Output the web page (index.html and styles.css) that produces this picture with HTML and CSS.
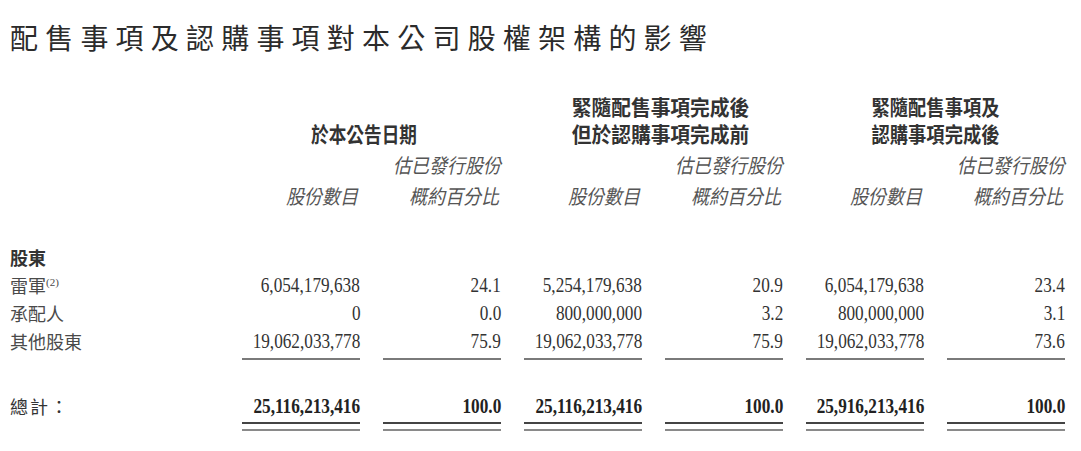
FILE: index.html
```html
<!DOCTYPE html>
<html lang="zh-Hant">
<head>
<meta charset="utf-8">
<title>配售事項及認購事項對本公司股權架構的影響</title>
<link rel="stylesheet" href="styles.css">
</head>
<body>
<h1 class="title">配售事項及認購事項對本公司股權架構的影響</h1>
<div class="sheet">
  <div class="blank"></div>
  <div class="group g1"><span class="hd">於本公告日期</span></div>
  <div class="group g2"><span class="hd">緊隨配售事項完成後<br>但於認購事項完成前</span></div>
  <div class="group g3"><span class="hd">緊隨配售事項及<br>認購事項完成後</span></div>

  <div class="blank"></div>
  <div class="sub"></div><div class="sub"><span>估已發行股份</span></div>
  <div class="sub"></div><div class="sub"><span>估已發行股份</span></div>
  <div class="sub"></div><div class="sub"><span>估已發行股份</span></div>

  <div class="blank"></div>
  <div class="sub"><span>股份數目</span></div><div class="sub"><span>概約百分比</span></div>
  <div class="sub"><span>股份數目</span></div><div class="sub"><span>概約百分比</span></div>
  <div class="sub"><span>股份數目</span></div><div class="sub"><span>概約百分比</span></div>

  <div class="sect">股東</div>

  <div class="lab">雷軍<sup class="note">(2)</sup></div>
  <div class="num"><span>6,054,179,638</span></div><div class="num"><span>24.1</span></div>
  <div class="num"><span>5,254,179,638</span></div><div class="num"><span>20.9</span></div>
  <div class="num"><span>6,054,179,638</span></div><div class="num"><span>23.4</span></div>

  <div class="lab">承配人</div>
  <div class="num"><span>0</span></div><div class="num"><span>0.0</span></div>
  <div class="num"><span>800,000,000</span></div><div class="num"><span>3.2</span></div>
  <div class="num"><span>800,000,000</span></div><div class="num"><span>3.1</span></div>

  <div class="lab">其他股東</div>
  <div class="num rule"><span>19,062,033,778</span></div><div class="num rule"><span>75.9</span></div>
  <div class="num rule"><span>19,062,033,778</span></div><div class="num rule"><span>75.9</span></div>
  <div class="num rule"><span>19,062,033,778</span></div><div class="num rule"><span>73.6</span></div>

  <div class="spacer"></div>

  <div class="lab total-lab">總計：</div>
  <div class="num total"><div class="in"><span>25,116,213,416</span></div></div>
  <div class="num total"><div class="in"><span>100.0</span></div></div>
  <div class="num total"><div class="in"><span>25,116,213,416</span></div></div>
  <div class="num total"><div class="in"><span>100.0</span></div></div>
  <div class="num total"><div class="in"><span>25,916,213,416</span></div></div>
  <div class="num total"><div class="in"><span>100.0</span></div></div>
</div>
</body>
</html>
```
FILE: styles.css
```css
html, body {
  margin: 0;
  padding: 0;
  background: #ffffff;
}

body {
  font-family: "Noto Sans CJK TC", "Noto Sans", sans-serif;
  color: #333333;
}

.title {
  margin: 20px 0 0 10px;
  font-size: 28px;
  line-height: 34px;
  font-weight: 400;
  letter-spacing: 7.2px;
  color: #2b2b2b;
  white-space: nowrap;
}

.sheet {
  display: grid;
  grid-template-columns: 209px repeat(6, 118px);
  column-gap: 23px;
  margin: 39px 0 0 10px;
  align-items: start;
}

.group {
  grid-column: span 2;
  align-self: end;
  text-align: center;
  line-height: 27px;
  white-space: nowrap;
}

.g1 { padding-right: 15px; }
.g2 { padding-left: 14px; }

.hd {
  display: inline-block;
  font-size: 21px;
  font-weight: 700;
  color: #333333;
  text-align: left;
  transform: scaleX(0.84);
  transform-origin: center;
}

.g2 .hd { transform: scaleX(0.94); }
.g3 .hd { transform: scaleX(0.87); }

.sub {
  text-align: right;
  line-height: 31px;
  height: 31px;
  white-space: nowrap;
}

.sub span {
  display: inline-block;
  font-size: 20px;
  color: #555555;
  transform: scaleX(0.9) skewX(-14deg);
  transform-origin: right center;
}

.sect {
  grid-column: 1 / -1;
  margin-top: 32px;
  font-size: 18px;
  line-height: 28px;
  font-weight: 700;
  color: #333333;
}

.lab {
  font-size: 18px;
  line-height: 28px;
  color: #4a4a4a;
  white-space: nowrap;
}

.note {
  font-family: "Liberation Serif", serif;
  font-size: 11px;
  vertical-align: 7px;
  line-height: 0;
}

.num {
  display: flex;
  justify-content: flex-end;
  line-height: 28px;
  white-space: nowrap;
}

.num span {
  display: inline-block;
  font-family: "Liberation Serif", serif;
  font-size: 21px;
  color: #333333;
  transform: scaleX(0.82);
  transform-origin: right center;
}

.rule {
  padding-bottom: 3px;
  border-bottom: 2px solid #7a7a7a;
}

.spacer {
  grid-column: 1 / -1;
  height: 32px;
}

.total-lab {
  font-size: 18px;
  letter-spacing: 2px;
  color: #333333;
}

.total {
  display: block;
  padding-bottom: 5px;
  border-bottom: 2px solid #8a8a8a;
}

.total .in {
  display: flex;
  justify-content: flex-end;
  padding-bottom: 2px;
  border-bottom: 2px solid #444444;
}

.total span {
  font-weight: 700;
  color: #222222;
}
```
